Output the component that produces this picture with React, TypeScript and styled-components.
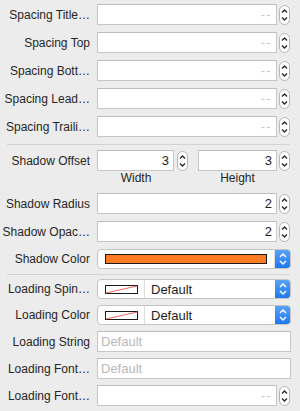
import React from "react";
import styled, { createGlobalStyle } from "styled-components";

const Global = createGlobalStyle`
  html, body { margin: 0; padding: 0; background: #ececec; }
  body { font-family: "Liberation Sans", Arial, sans-serif; }
`;

const Panel = styled.div`
  width: 300px;
  height: 411px;
  box-sizing: border-box;
  padding: 4px 9px 0 0;
  background: #ececec;
  overflow: hidden;
`;

const Section = styled.div<{ $gap: number }>`
  display: flex;
  flex-direction: column;
  gap: ${(p) => p.$gap}px;
`;

const Separator = styled.div<{ $top: number; $bottom: number }>`
  height: 1px;
  background: #d3d3d3;
  margin: ${(p) => p.$top}px 1px ${(p) => p.$bottom}px 7px;
`;

const Row = styled.div<{ $h?: number }>`
  display: grid;
  grid-template-columns: 90px 194px;
  column-gap: 7px;
  align-items: center;
  height: ${(p) => p.$h ?? 21}px;
`;

const Label = styled.div`
  text-align: right;
  font-size: 12px;
  color: #262626;
  white-space: nowrap;
  overflow: hidden;
`;

const StepperGroup = styled.div<{ $gap?: number; $auto?: boolean }>`
  display: flex;
  align-items: center;
  gap: ${(p) => p.$gap ?? 2}px;
  width: ${(p) => (p.$auto ? "auto" : "193px")};
`;

const Field = styled.div<{ $h?: number }>`
  flex: 1;
  min-width: 0;
  height: ${(p) => p.$h ?? 21}px;
  box-sizing: border-box;
  background: #fff;
  border: 1px solid #c6c6c6;
  border-top-color: #bdbdbd;
  display: flex;
  align-items: center;
  padding: 0 4px 0 3px;
  font-size: 13px;
  color: #1e1e1e;
`;

const Value = styled.span<{ $placeholder?: boolean }>`
  margin-left: auto;
  color: ${(p) => (p.$placeholder ? "#c4c4c4" : "#1e1e1e")};
  letter-spacing: ${(p) => (p.$placeholder ? "1.5px" : "0")};
  font-size: ${(p) => (p.$placeholder ? "12px" : "13px")};
`;

const Placeholder = styled.span`
  color: #b9b9b9;
  font-size: 13px;
`;

const PairGrid = styled.div`
  display: grid;
  grid-template-columns: 91px 1fr;
  column-gap: 10px;
  width: 193px;
`;

const SubLabel = styled.div`
  font-size: 12px;
  color: #262626;
  text-align: center;
  padding-right: 13px;
  line-height: 15px;
`;

const Popup = styled.div`
  height: 20px;
  box-sizing: border-box;
  background: #fff;
  border: 1px solid #c4c4c4;
  border-radius: 4px;
  display: flex;
  align-items: stretch;
  overflow: hidden;
`;

const WellSegment = styled.div<{ $grow?: boolean }>`
  display: flex;
  align-items: center;
  justify-content: center;
  box-sizing: border-box;
  ${(p) => (p.$grow ? "flex: 1; padding: 0 7px;" : "width: 47px; flex: none;")}
  border-right: 1px solid #dedede;
`;

const ColorBar = styled.div<{ $color: string }>`
  flex: 1;
  height: 10px;
  box-sizing: border-box;
  border: 1px solid #1a1a1a;
  background: ${(p) => p.$color};
`;

const PopupText = styled.div`
  flex: 1;
  display: flex;
  align-items: center;
  padding-left: 6px;
  font-size: 13px;
  color: #1e1e1e;
`;

const BlueButton = styled.div`
  width: 16px;
  margin: -1px -1px -1px 0;
  background: linear-gradient(#5aa6fb, #1b74ec);
  border-radius: 0 4px 4px 0;
  display: flex;
  align-items: center;
  justify-content: center;
`;

const Stepper = () => (
  <svg width="11" height="20" viewBox="0 0 11 20" style={{ flex: "none" }}>
    <rect x="0.5" y="0.5" width="10" height="19" rx="5" fill="#fff" stroke="#b4b4b4" />
    <polyline points="3,7.5 5.5,5 8,7.5" fill="none" stroke="#2a2a2a" strokeWidth="1.4" />
    <polyline points="3,12.5 5.5,15 8,12.5" fill="none" stroke="#2a2a2a" strokeWidth="1.4" />
  </svg>
);

const Chevrons = () => (
  <svg width="16" height="20" viewBox="0 0 16 20">
    <polyline points="5,8 8,5 11,8" fill="none" stroke="#fff" strokeWidth="1.5" />
    <polyline points="5,12 8,15 11,12" fill="none" stroke="#fff" strokeWidth="1.5" />
  </svg>
);

const NoColor = () => (
  <svg width="33" height="9" viewBox="0 0 33 9">
    <rect x="0.5" y="0.5" width="32" height="8" fill="#fff" stroke="#1a1a1a" />
    <line x1="1" y1="8" x2="32" y2="1" stroke="#f06464" strokeWidth="1" />
  </svg>
);

const NumberRow = ({ label, value }: { label: string; value?: string }) => (
  <Row>
    <Label>{label}</Label>
    <StepperGroup>
      <Field>{value ? <Value>{value}</Value> : <Value $placeholder>--</Value>}</Field>
      <Stepper />
    </StepperGroup>
  </Row>
);

const ColorPopupRow = ({ label }: { label: string }) => (
  <Row $h={20}>
    <Label>{label}</Label>
    <Popup>
      <WellSegment>
        <NoColor />
      </WellSegment>
      <PopupText>Default</PopupText>
      <BlueButton>
        <Chevrons />
      </BlueButton>
    </Popup>
  </Row>
);

const TextRow = ({ label }: { label: string }) => (
  <Row>
    <Label>{label}</Label>
    <Field>
      <Placeholder>Default</Placeholder>
    </Field>
  </Row>
);

export default function App() {
  return (
    <Panel>
      <Global />
      <Section $gap={7}>
        <NumberRow label="Spacing Title…" />
        <NumberRow label="Spacing Top" />
        <NumberRow label="Spacing Bott…" />
        <NumberRow label="Spacing Lead…" />
        <NumberRow label="Spacing Traili…" />
      </Section>
      <Separator $top={7} $bottom={5} />
      <Section $gap={7}>
        <div>
          <Row>
            <Label>Shadow Offset</Label>
            <PairGrid>
              <StepperGroup $auto $gap={3}>
                <Field>
                  <Value>3</Value>
                </Field>
                <Stepper />
              </StepperGroup>
              <StepperGroup $auto>
                <Field>
                  <Value>3</Value>
                </Field>
                <Stepper />
              </StepperGroup>
            </PairGrid>
          </Row>
          <Row $h={15}>
            <span />
            <PairGrid>
              <SubLabel>Width</SubLabel>
              <SubLabel>Height</SubLabel>
            </PairGrid>
          </Row>
        </div>
        <NumberRow label="Shadow Radius" value="2" />
        <NumberRow label="Shadow Opac…" value="2" />
        <Row $h={20}>
          <Label>Shadow Color</Label>
          <Popup>
            <WellSegment $grow>
              <ColorBar $color="#fd7b22" />
            </WellSegment>
            <BlueButton>
              <Chevrons />
            </BlueButton>
          </Popup>
        </Row>
      </Section>
      <Separator $top={5} $bottom={4} />
      <Section $gap={6}>
        <ColorPopupRow label="Loading Spin…" />
        <ColorPopupRow label="Loading Color" />
        <TextRow label="Loading String" />
        <TextRow label="Loading Font…" />
        <NumberRow label="Loading Font…" />
      </Section>
    </Panel>
  );
}
